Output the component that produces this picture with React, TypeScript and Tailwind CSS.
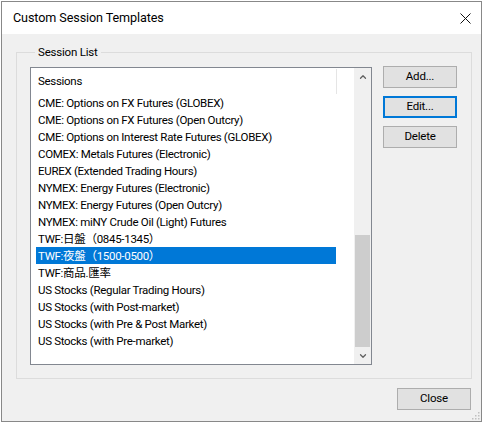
import { ChevronUp, ChevronDown } from 'lucide-react';

const SESSIONS = [
  'CME: Options on FX Futures (GLOBEX)',
  'CME: Options on FX Futures (Open Outcry)',
  'CME: Options on Interest Rate Futures (GLOBEX)',
  'COMEX: Metals Futures (Electronic)',
  'EUREX (Extended Trading Hours)',
  'NYMEX: Energy Futures (Electronic)',
  'NYMEX: Energy Futures (Open Outcry)',
  'NYMEX: miNY Crude Oil (Light) Futures',
  'TWF:日盤（0845-1345）',
  'TWF:夜盤（1500-0500）',
  'TWF:商品.匯率',
  'US Stocks (Regular Trading Hours)',
  'US Stocks (with Post-market)',
  'US Stocks (with Pre & Post Market)',
  'US Stocks (with Pre-market)',
];

const SELECTED = 9;

function WinButton({ label, focused = false }: { label: string; focused?: boolean }) {
  return (
    <button
      className={`w-[74px] h-[22px] bg-[#e1e1e1] text-[11.5px] tracking-[-0.2px] text-black leading-none ${
        focused ? 'border-2 border-[#0078d7]' : 'border border-[#adadad]'
      }`}
    >
      {label}
    </button>
  );
}

export default function App() {
  return (
    <div className="w-[485px] h-[425px] bg-white pt-px pl-px font-['Roboto','Noto_Sans_CJK_TC',sans-serif] text-black">
      <div className="w-[481px] h-[421px] border border-[#888888] flex flex-col">
        {/* Title bar */}
        <div className="h-[32px] bg-white flex items-center justify-between pl-[11px] pr-[9px] shrink-0">
          <span className="text-[12.6px] tracking-[-0.1px]">Custom Session Templates</span>
          <svg width="11" height="11" viewBox="0 0 11 11" className="mr-[1px]">
            <path d="M0.5 0.5 L10.5 10.5 M10.5 0.5 L0.5 10.5" stroke="#111" strokeWidth="1" />
          </svg>
        </div>

        {/* Body */}
        <div className="flex-1 bg-[#f0f0f0] flex flex-col pl-[14px] pr-[9px]">
          <fieldset className="mt-[10px] h-[335px] border border-[#dcdcdc] pl-[13px] pr-[14px]">
            <legend className="ml-[5px] px-[3px] text-[11.5px] tracking-[-0.2px] leading-[16px]">Session List</legend>
            <div className="flex gap-[11px] mt-[7px]">
              {/* List box */}
              <div className="w-[342px] h-[298px] border border-[#828790] bg-white flex text-[11.5px] tracking-[-0.3px]">
                <div className="flex-1 flex flex-col">
                  <div className="h-[26px] flex items-center pt-px">
                    <div className="w-[305px] pl-[7px]">Sessions</div>
                    <div className="w-px h-full bg-[#e5e5e5]" />
                  </div>
                  <div className="pl-[5px]">
                    {SESSIONS.map((s, i) => (
                      <div
                        key={s}
                        className={`w-[300px] h-[17px] pl-[2px] leading-[18px] whitespace-nowrap overflow-hidden ${
                          i === SELECTED ? 'bg-[#0078d7] text-white' : ''
                        }`}
                      >
                        {s}
                      </div>
                    ))}
                  </div>
                </div>
                {/* Scrollbar */}
                <div className="w-[17px] bg-[#f0f0f0] flex flex-col">
                  <div className="h-[17px] flex items-center justify-center">
                    <ChevronUp className="w-[10px] h-[10px] text-[#606060]" strokeWidth={3} />
                  </div>
                  <div className="flex-1 flex flex-col justify-end">
                    <div className="h-[112px] mx-[1px] bg-[#cdcdcd]" />
                  </div>
                  <div className="h-[17px] flex items-center justify-center">
                    <ChevronDown className="w-[10px] h-[10px] text-[#606060]" strokeWidth={3} />
                  </div>
                </div>
              </div>

              {/* Buttons */}
              <div className="flex flex-col gap-[8px] -mt-px">
                <WinButton label="Add..." />
                <WinButton label="Edit..." focused />
                <WinButton label="Delete" />
              </div>
            </div>
          </fieldset>

          <div className="flex justify-end mt-[9px] pr-[1px]">
            <WinButton label="Close" />
          </div>
          <div className="flex-1 flex justify-end items-end pb-[1px] -mr-[8px]">
            <svg width="8" height="8" viewBox="0 0 8 8">
              <rect x="6" y="0" width="1.5" height="1.5" fill="#c0c0c0" />
              <rect x="3" y="3" width="1.5" height="1.5" fill="#c0c0c0" />
              <rect x="6" y="3" width="1.5" height="1.5" fill="#c0c0c0" />
              <rect x="0" y="6" width="1.5" height="1.5" fill="#c0c0c0" />
              <rect x="3" y="6" width="1.5" height="1.5" fill="#c0c0c0" />
              <rect x="6" y="6" width="1.5" height="1.5" fill="#c0c0c0" />
            </svg>
          </div>
        </div>
      </div>
    </div>
  );
}
